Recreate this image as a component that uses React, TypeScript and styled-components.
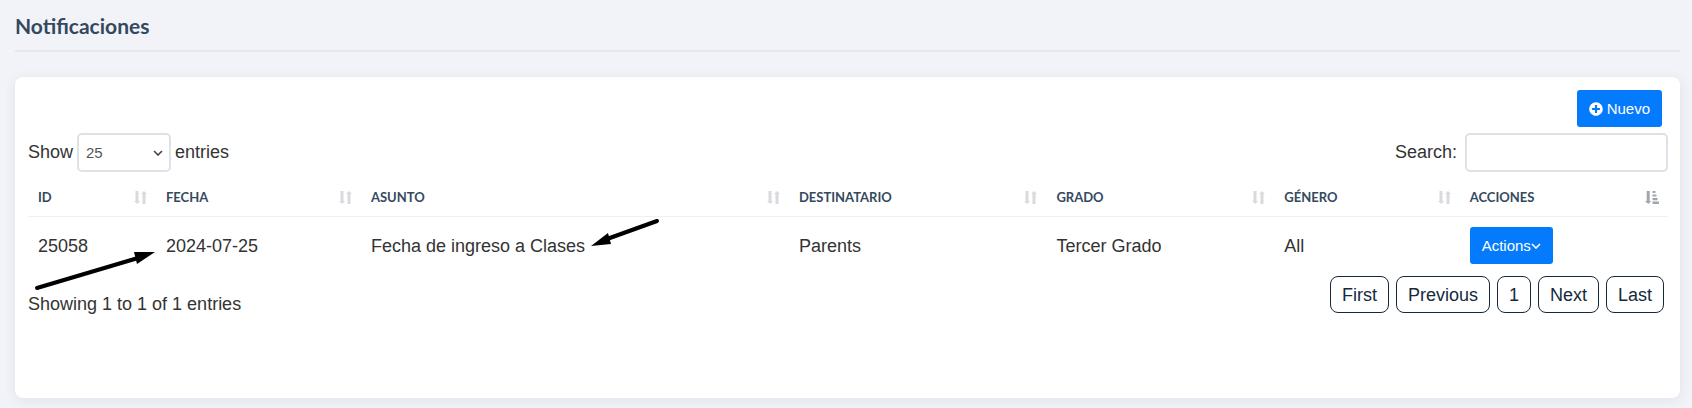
import React from 'react';
import styled, { createGlobalStyle } from 'styled-components';
import { FaPlusCircle } from 'react-icons/fa';

const GlobalStyle = createGlobalStyle`
  *, *::before, *::after { box-sizing: border-box; }
  body {
    margin: 0;
    background: #f2f3f8;
    color: #333;
    font-family: "Liberation Sans", Arial, sans-serif;
    font-size: 18px;
    line-height: 24px;
  }
  button, input, select { font-family: inherit; margin: 0; }
`;

const Page = styled.main`
  padding: 8px 12px 10px 15px;
`;

const PageTitle = styled.h1`
  margin: 0 0 25px;
  padding: 4px 0 10px;
  border-bottom: 2px solid #e4e7ec;
  color: #34495e;
  font: 700 21px/28px Lato, sans-serif;
`;

const Card = styled.section`
  min-height: 321px;
  padding: 13px 12px 16px 13px;
  background: #fff;
  border-radius: 8px;
  box-shadow: 0 2px 12px rgba(60, 80, 110, 0.1);
`;

const CardActions = styled.div`
  display: flex;
  justify-content: flex-end;
  padding-right: 6px;
`;

const PrimaryButton = styled.button<{ $gap: number }>`
  display: inline-flex;
  align-items: center;
  gap: ${(p) => p.$gap}px;
  height: 37px;
  padding: 0 12px;
  border: 0;
  border-radius: 3px;
  background: #047bfc;
  color: #fff;
  font-size: 15px;
  line-height: 20px;
  vertical-align: top;
`;

const Toolbar = styled.div`
  display: flex;
  justify-content: space-between;
  align-items: center;
  margin: 6px 0;
`;

const Field = styled.label<{ $gap: number }>`
  display: flex;
  align-items: center;
  gap: ${(p) => p.$gap}px;
`;

const FieldText = styled.span`
  padding-bottom: 2px;
`;

const SelectBox = styled.span`
  display: inline-grid;
  align-items: center;
  width: 94px;

  > * { grid-area: 1 / 1; }
  > svg { justify-self: end; margin-right: 8px; pointer-events: none; }
`;

const Select = styled.select`
  appearance: none;
  width: 100%;
  height: 39px;
  padding: 0 7px;
  border: 2px solid #dee1e7;
  border-radius: 5px;
  background: #fff;
  color: #555;
  font-size: 15px;
`;

const SearchInput = styled.input`
  width: 203px;
  height: 39px;
  padding: 0 8px;
  border: 2px solid #dee1e7;
  border-radius: 5px;
  background: #fff;
  color: #555;
  font-size: 15px;
`;

const Table = styled.table`
  width: 100%;
  table-layout: fixed;
  border-collapse: separate;
  border-spacing: 0;
`;

const HeadCell = styled.th<{ $width: string }>`
  width: ${(p) => p.$width};
  padding: 9px 9px 9px 10px;
  border-bottom: 1px solid #eff0f1;
  color: #34495e;
  font: 700 13px/20px Lato, sans-serif;
  text-align: left;
  text-transform: uppercase;
`;

const HeadContent = styled.div`
  display: flex;
  justify-content: space-between;
  align-items: center;
`;

const Cell = styled.td`
  position: relative;
  padding: 10px;
  line-height: 38px;
  vertical-align: top;
`;

const Arrow = styled.svg<{ $left: number; $top: number }>`
  position: absolute;
  left: ${(p) => p.$left}px;
  top: ${(p) => p.$top}px;
  z-index: 1;
  pointer-events: none;
`;

const Footer = styled.div`
  display: flex;
  justify-content: space-between;
  align-items: flex-start;
  padding-right: 4px;
`;

const Info = styled.p`
  margin: 0;
  padding-top: 17px;
`;

const Pagination = styled.nav`
  display: flex;
  gap: 7px;
  padding-top: 1px;
`;

const PageButton = styled.button`
  height: 37px;
  padding: 2px 11px 0;
  border: 1px solid #14293d;
  border-radius: 8px;
  background: #fff;
  color: #14293d;
  font-size: 18px;
`;

const SortIcon = () => (
  <svg width="13" height="13" viewBox="0 0 13 13" fill="#d8dade" aria-hidden="true">
    <path d="M1.5 0h3v10H6.2L3.2 13 0 10h1.5zM8.5 13h3V3H13L10 0 7 3h1.5z" />
  </svg>
);

const SortedIcon = () => (
  <svg width="14" height="13" viewBox="0 0 14 13" fill="#a0a5ae" aria-hidden="true">
    <path d="M1.7 0h3v10h1.6L3.2 13 0 10h1.7zM7.5 0h3v2h-3zM7.5 3.4h4v2.2h-4zM7.5 7h5v2.2h-5zM7.5 10.6h6.5V13H7.5z" />
  </svg>
);

const Chevron = ({ color }: { color: string }) => (
  <svg width="10" height="6" viewBox="0 0 10 6" fill="none" stroke={color} strokeWidth="1.6" aria-hidden="true">
    <path d="M1 1l4 4 4-4" />
  </svg>
);

const columns = [
  { label: 'ID', width: '7.8%' },
  { label: 'Fecha', width: '12.5%' },
  { label: 'Asunto', width: '26.1%' },
  { label: 'Destinatario', width: '15.7%' },
  { label: 'Grado', width: '13.9%' },
  { label: 'Género', width: '11.3%' },
  { label: 'Acciones', width: 'auto', sorted: true },
];

const pages = ['First', 'Previous', '1', 'Next', 'Last'];

export default function App() {
  return (
    <>
      <GlobalStyle />
      <Page>
        <PageTitle>Notificaciones</PageTitle>
        <Card>
          <CardActions>
            <PrimaryButton type="button" $gap={4}>
              <FaPlusCircle size={14} />
              Nuevo
            </PrimaryButton>
          </CardActions>
          <Toolbar>
            <Field $gap={4}>
              <FieldText>Show</FieldText>
              <SelectBox>
                <Select defaultValue="25">
                  <option>10</option>
                  <option>25</option>
                  <option>50</option>
                </Select>
                <Chevron color="#444" />
              </SelectBox>
              <FieldText>entries</FieldText>
            </Field>
            <Field $gap={8}>
              <FieldText>Search:</FieldText>
              <SearchInput type="search" />
            </Field>
          </Toolbar>
          <Table>
            <thead>
              <tr>
                {columns.map((c) => (
                  <HeadCell key={c.label} $width={c.width} scope="col">
                    <HeadContent>
                      {c.label}
                      {c.sorted ? <SortedIcon /> : <SortIcon />}
                    </HeadContent>
                  </HeadCell>
                ))}
              </tr>
            </thead>
            <tbody>
              <tr>
                <Cell>
                  25058
                  <Arrow $left={4} $top={30} width="126" height="46" viewBox="0 0 126 46" aria-hidden="true">
                    <path d="M5 41L106 11" stroke="#000" strokeWidth="4" strokeLinecap="round" />
                    <path d="M123 5L102 5L105 17z" />
                  </Arrow>
                </Cell>
                <Cell>2024-07-25</Cell>
                <Cell>
                  Fecha de ingreso a Clases
                  <Arrow $left={226} $top={0} width="76" height="34" viewBox="0 0 76 34" aria-hidden="true">
                    <path d="M70 4L20 22" stroke="#000" strokeWidth="4" strokeLinecap="round" />
                    <path d="M4 29L21 16L24 27z" />
                  </Arrow>
                </Cell>
                <Cell>Parents</Cell>
                <Cell>Tercer Grado</Cell>
                <Cell>All</Cell>
                <Cell>
                  <PrimaryButton type="button" $gap={0}>
                    Actions
                    <Chevron color="#fff" />
                  </PrimaryButton>
                </Cell>
              </tr>
            </tbody>
          </Table>
          <Footer>
            <Info>Showing 1 to 1 of 1 entries</Info>
            <Pagination aria-label="Pagination">
              {pages.map((p) => (
                <PageButton key={p} type="button">{p}</PageButton>
              ))}
            </Pagination>
          </Footer>
        </Card>
      </Page>
    </>
  );
}
